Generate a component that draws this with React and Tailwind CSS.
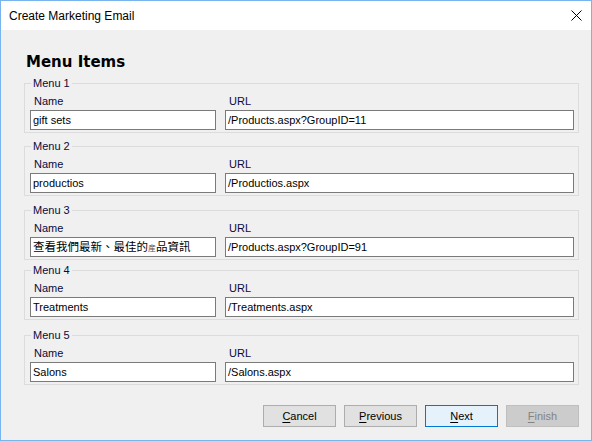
import React from "react";

const menus = [
  { n: 1, name: "gift sets", url: "/Products.aspx?GroupID=11" },
  { n: 2, name: "productios", url: "/Productios.aspx" },
  { n: 3, name: null, url: "/Products.aspx?GroupID=91" },
  { n: 4, name: "Treatments", url: "/Treatments.aspx" },
  { n: 5, name: "Salons", url: "/Salons.aspx" },
];

const gapClass = ["mt-0", "mt-[7px]", "mt-[8px]", "mt-[4px]", "mt-[9px]"];

function TextBox({ children }) {
  return (
    <div className="h-[20px] border border-[#7a7a7a] bg-white pl-[2px] flex items-center text-[11px] text-black whitespace-nowrap overflow-hidden">
      {children}
    </div>
  );
}

function Button({ first, rest, variant }) {
  const cls =
    variant === "focus"
      ? "bg-[#e5f1fb] border-[#0078d7] text-black"
      : variant === "disabled"
      ? "bg-[#cccccc] border-[#bfbfbf] text-[#838383]"
      : "bg-[#e1e1e1] border-[#adadad] text-black";
  return (
    <div className={`w-[73px] h-[22px] border flex items-center justify-center text-[11px] ${cls}`}>
      <span>
        <span className="underline underline-offset-[2px]">{first}</span>
        {rest}
      </span>
    </div>
  );
}

export default function App() {
  return (
    <div
      className="w-[592px] h-[441px] border border-[#78b4ee] bg-[#f0f0f0] flex flex-col overflow-hidden"
      style={{ fontFamily: '"Liberation Sans", Arial, sans-serif' }}
    >
      <div className="h-[29px] bg-white flex items-center justify-between pl-[8px] pr-[9px] shrink-0">
        <span className="text-[12px] text-black">Create Marketing Email</span>
        <svg width="11" height="11" viewBox="0 0 11 11" className="block">
          <path d="M0.5 0.5 L10.5 10.5 M10.5 0.5 L0.5 10.5" stroke="#000" strokeWidth="1" fill="none" />
        </svg>
      </div>
      <div className="flex flex-col pl-[23px] pr-[12px] pt-[23px]">
        <div
          className="text-[15px] font-bold text-black leading-[18px] pl-[2px]"
          style={{ fontFamily: '"DejaVu Sans", Verdana, sans-serif' }}
        >
          Menu Items
        </div>
        <div className="flex flex-col mt-[6px]">
          {menus.map((m, i) => (
            <fieldset
              key={m.n}
              className={`border border-[#dcdcdc] w-[555px] pl-[5px] pr-[4px] pb-[2px] ${gapClass[i]}`}
            >
              <legend className="text-[11px] leading-[13px] text-[#0a0a3c] ml-[1px] px-[2px]">
                Menu {m.n}
              </legend>
              <div className="grid grid-cols-[186px_349px] gap-x-[9px] pt-[5px]">
                <div className="text-[11px] leading-[13px] pl-[4px] text-[#0a0a3c]">Name</div>
                <div className="text-[11px] leading-[13px] pl-[4px] text-[#0a0a3c]">URL</div>
                <div className="mt-[2px]">
                  <TextBox>
                    {m.name ? (
                      m.name
                    ) : (
                      <span
                        className="text-[11.5px]"
                        style={{ fontFamily: '"Noto Sans CJK TC", "Noto Sans CJK SC", sans-serif' }}
                      >
                        查看我們最新、最佳的<span className="text-[8px] text-[#555]">産</span>品資訊
                      </span>
                    )}
                  </TextBox>
                </div>
                <div className="mt-[2px]">
                  <TextBox>{m.url}</TextBox>
                </div>
              </div>
            </fieldset>
          ))}
        </div>
        <div className="flex justify-end gap-[8px] mt-[20px] w-[555px]">
          <Button first="C" rest="ancel" />
          <Button first="P" rest="revious" />
          <Button first="N" rest="ext" variant="focus" />
          <Button first="F" rest="inish" variant="disabled" />
        </div>
      </div>
    </div>
  );
}
